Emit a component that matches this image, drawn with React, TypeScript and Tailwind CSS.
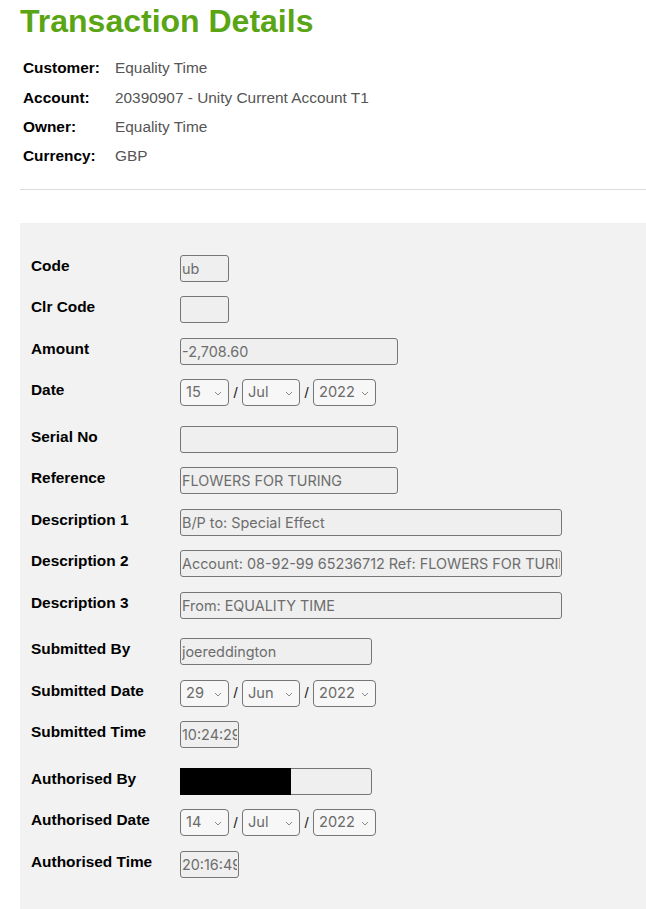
import React from "react";

const inputFont = "font-['Inter','Liberation_Sans',sans-serif]";

function TextBox({ value = "", w, redacted }: { value?: string; w: string; redacted?: number }) {
  return (
    <div className={`relative ${w} h-[27px]`}>
      <input
        readOnly
        value={value}
        className={`w-full h-full box-border border border-[#767676] rounded-[3px] bg-[#efefef] px-[1px] text-[14.4px] text-[#6d6d6d] outline-none ${inputFont}`}
      />
      {redacted ? (
        <div className="absolute left-0 top-0 h-full bg-black" style={{ width: redacted }} />
      ) : null}
    </div>
  );
}

function Chevron() {
  return (
    <svg width="8" height="5" viewBox="0 0 8 5" className="absolute right-[6px] top-[11px]">
      <polyline points="1,1 4,4 7,1" fill="none" stroke="#8a8a8a" strokeWidth="1" />
    </svg>
  );
}

function Sel({ value, w }: { value: string; w: string }) {
  return (
    <div
      className={`relative ${w} h-[27px] border border-[#767676] rounded-[4px] bg-[#f7f7f7] pl-[5px] flex items-center text-[14.6px] text-[#6a6a6a] ${inputFont}`}
    >
      {value}
      <Chevron />
    </div>
  );
}

function DateSel({ d, m, y }: { d: string; m: string; y: string }) {
  return (
    <div className="flex items-center">
      <Sel value={d} w="w-[49px]" />
      <span className="w-[13px] text-center text-[15px] text-[#222]">/</span>
      <Sel value={m} w="w-[58px]" />
      <span className="w-[13px] text-center text-[15px] text-[#222]">/</span>
      <Sel value={y} w="w-[63px]" />
    </div>
  );
}

function Row({ label, children }: { label: string; children: React.ReactNode }) {
  return (
    <div className="flex h-[41.5px] items-start">
      <div className="w-[149px] pt-[2px] leading-[17px] text-[15.4px] font-bold text-black">{label}</div>
      {children}
    </div>
  );
}

export default function App() {
  const header: [string, string][] = [
    ["Customer:", "Equality Time"],
    ["Account:", "20390907 - Unity Current Account T1"],
    ["Owner:", "Equality Time"],
    ["Currency:", "GBP"],
  ];
  return (
    <div className="min-h-screen bg-white pl-5 font-['Liberation_Sans',Arial,sans-serif]">
      <h1 className="pt-[2px] text-[32px] leading-[38px] font-bold text-[#5aa514]">Transaction Details</h1>
      <div className="mt-[13px] pl-[3px]">
        {header.map(([k, v]) => (
          <div key={k} className="flex h-[29.4px] items-center text-[15.4px]">
            <div className="w-[92px] font-bold text-black">{k}</div>
            <div className="text-[#555]">{v}</div>
          </div>
        ))}
      </div>
      <div className="mt-[18.4px] border-t border-[#dcdcdc]" />
      <div className="mt-[33px] bg-[#f2f2f2] pl-[11px] pt-[32px] pb-[40px]">
        <div className="flex flex-col gap-[5px]">
          <div>
            <Row label="Code">
              <TextBox value="ub" w="w-[49px]" />
            </Row>
            <Row label="Clr Code">
              <TextBox w="w-[49px]" />
            </Row>
            <Row label="Amount">
              <TextBox value="-2,708.60" w="w-[218px]" />
            </Row>
            <Row label="Date">
              <DateSel d="15" m="Jul" y="2022" />
            </Row>
          </div>
          <div>
            <Row label="Serial No">
              <TextBox w="w-[218px]" />
            </Row>
            <Row label="Reference">
              <TextBox value="FLOWERS FOR TURING" w="w-[218px]" />
            </Row>
            <Row label="Description 1">
              <TextBox value="B/P to: Special Effect" w="w-[382px]" />
            </Row>
            <Row label="Description 2">
              <TextBox value="Account: 08-92-99 65236712 Ref: FLOWERS FOR TURING" w="w-[382px]" />
            </Row>
            <Row label="Description 3">
              <TextBox value="From: EQUALITY TIME" w="w-[382px]" />
            </Row>
          </div>
          <div>
            <Row label="Submitted By">
              <TextBox value="joereddington" w="w-[192px]" />
            </Row>
            <Row label="Submitted Date">
              <DateSel d="29" m="Jun" y="2022" />
            </Row>
            <Row label="Submitted Time">
              <TextBox value="10:24:29" w="w-[59px]" />
            </Row>
          </div>
          <div>
            <Row label="Authorised By">
              <TextBox value="" w="w-[192px]" redacted={111} />
            </Row>
            <Row label="Authorised Date">
              <DateSel d="14" m="Jul" y="2022" />
            </Row>
            <Row label="Authorised Time">
              <TextBox value="20:16:49" w="w-[59px]" />
            </Row>
          </div>
        </div>
      </div>
    </div>
  );
}
